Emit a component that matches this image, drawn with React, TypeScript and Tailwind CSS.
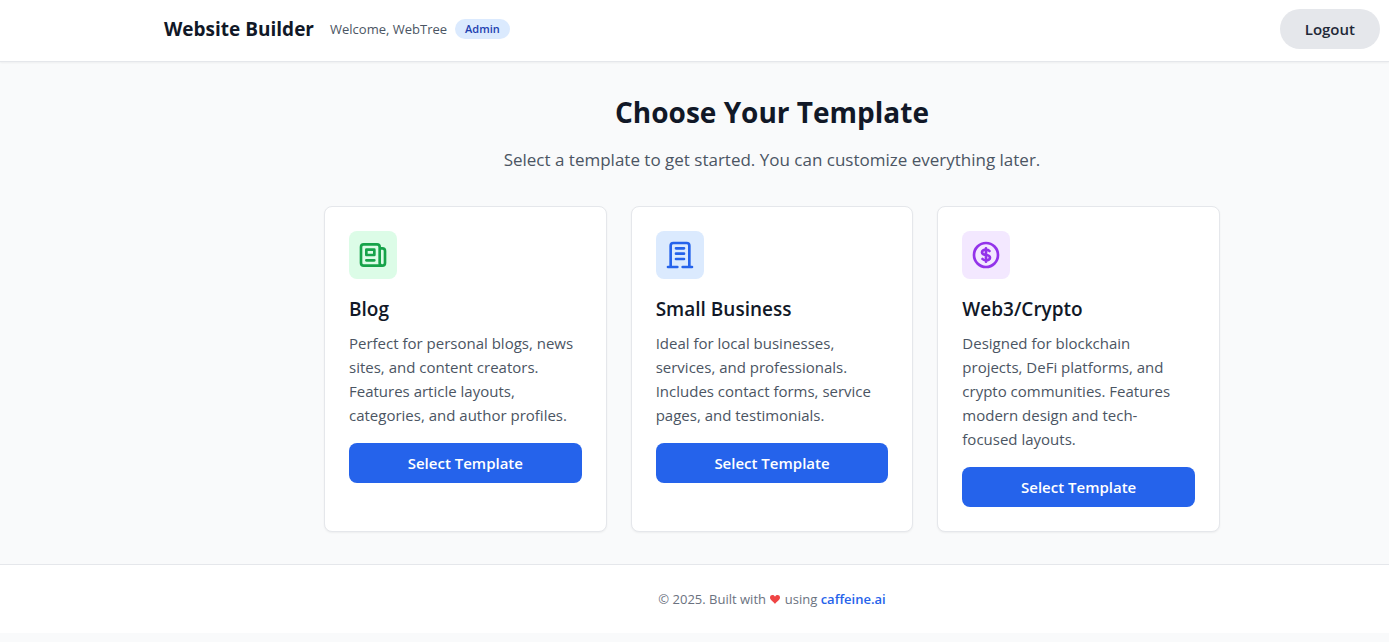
import React from 'react';

interface Template {
  id: string;
  name: string;
  description: string;
  iconPath: string;
  iconClass: string;
}

const templates: Template[] = [
  {
    id: 'blog',
    name: 'Blog',
    description:
      'Perfect for personal blogs, news sites, and content creators. Features article layouts, categories, and author profiles.',
    iconPath:
      'M19 20H5a2 2 0 01-2-2V6a2 2 0 012-2h10a2 2 0 012 2v1m2 13a2 2 0 01-2-2V7m2 13a2 2 0 002-2V9a2 2 0 00-2-2h-2m-4-3H9M7 16h6M7 8h6v4H7V8z',
    iconClass: 'bg-[#dcfce7] text-[#16a34a]',
  },
  {
    id: 'small-business',
    name: 'Small Business',
    description:
      'Ideal for local businesses, services, and professionals. Includes contact forms, service pages, and testimonials.',
    iconPath:
      'M19 21V5a2 2 0 00-2-2H7a2 2 0 00-2 2v16m14 0h2m-2 0h-5m-9 0H3m2 0h5M9 7h6m-6 4h6m-6 4h6',
    iconClass: 'bg-[#dbeafe] text-[#2563eb]',
  },
  {
    id: 'web3',
    name: 'Web3/Crypto',
    description:
      'Designed for blockchain projects, DeFi platforms, and crypto communities. Features modern design and tech-focused layouts.',
    iconPath:
      'M12 8c-1.657 0-3 .895-3 2s1.343 2 3 2 3 .895 3 2-1.343 2-3 2m0-8c1.11 0 2.08.402 2.599 1M12 8V7m0 1v8m0 0v1m0-1c-1.11 0-2.08-.402-2.599-1M21 12a9 9 0 11-18 0 9 9 0 0118 0z',
    iconClass: 'bg-[#f3e8ff] text-[#9333ea]',
  },
];

const Header: React.FC = () => (
  <header className="bg-white border-b border-[#e5e7eb] shadow-xs pl-[155px]">
    <div className="flex items-center justify-between px-[9px] pt-[9px] pb-3">
      <div className="flex items-center gap-4">
        <h1 className="text-[19px] leading-7 font-bold text-[#111827]">Website Builder</h1>
        <div className="flex items-center gap-2">
          <span className="text-[13px] leading-5 text-[#4b5563]">Welcome, WebTree</span>
          <span className="rounded-full bg-[#dbeafe] px-[10px] text-[11px] leading-5 font-semibold text-[#1e40af]">
            Admin
          </span>
        </div>
      </div>
      <button
        type="button"
        className="rounded-full bg-[#e5e7eb] px-[25px] py-2 text-[15px] leading-6 font-semibold text-[#1f2937] hover:bg-gray-300"
      >
        Logout
      </button>
    </div>
  </header>
);

const TemplateCard: React.FC<{ template: Template }> = ({ template }) => (
  <div className="rounded-lg border border-[#e5e7eb] bg-white p-6 shadow-xs">
    <div className={`mb-4 flex h-12 w-12 items-center justify-center rounded-lg ${template.iconClass}`}>
      <svg className="h-8 w-8" fill="none" stroke="currentColor" viewBox="0 0 24 24" aria-hidden="true">
        <path strokeLinecap="round" strokeLinejoin="round" strokeWidth="2" d={template.iconPath} />
      </svg>
    </div>
    <h3 className="mb-2 text-[19px] leading-7 font-semibold text-[#111827]">{template.name}</h3>
    <p className="mb-4 pr-1.5 text-[15px] leading-6 text-[#4b5563]">{template.description}</p>
    <button
      type="button"
      className="w-full rounded-lg bg-[#2563eb] px-4 py-2 text-[15px] leading-6 font-semibold text-white hover:bg-blue-700"
    >
      Select Template
    </button>
  </div>
);

const App: React.FC = () => {
  return (
    <div className="min-h-screen bg-[#f9fafb] font-['Open_Sans',sans-serif]">
      <Header />

      <main className="py-8 pl-[155px]">
        <div className="mx-auto max-w-4xl">
          <div className="mb-8 text-center">
            <h2 className="mb-4 text-[28px] leading-9 font-bold text-[#111827]">Choose Your Template</h2>
            <p className="text-[17px] leading-7 text-[#4b5563]">
              Select a template to get started. You can customize everything later.
            </p>
          </div>
          <div className="grid grid-cols-3 gap-6">
            {templates.map((template) => (
              <TemplateCard key={template.id} template={template} />
            ))}
          </div>
        </div>
      </main>

      <footer className="border-t border-[#e5e7eb] bg-white py-6 pl-[155px]">
        <p className="text-center text-[13px] leading-5 text-[#6b7280]">
          © 2025. Built with{' '}
          <svg className="mx-px inline-block h-[9px] w-[10px] align-baseline text-[#ef4444]" fill="currentColor" viewBox="0 0 18 16" aria-label="love">
            <path d="M9 16C6 12 0 9 0 4.500C0 1.500 2 0 4.500 0C6.500 0 8.200 1 9 3C9.800 1 11.500 0 13.500 0C16 0 18 1.500 18 4.500C18 9 12 12 9 16Z" />
          </svg>{' '}
          using{' '}
          <a href="#" className="font-semibold text-[#2563eb] hover:text-blue-700">
            caffeine.ai
          </a>
        </p>
      </footer>
    </div>
  );
};

export default App;
